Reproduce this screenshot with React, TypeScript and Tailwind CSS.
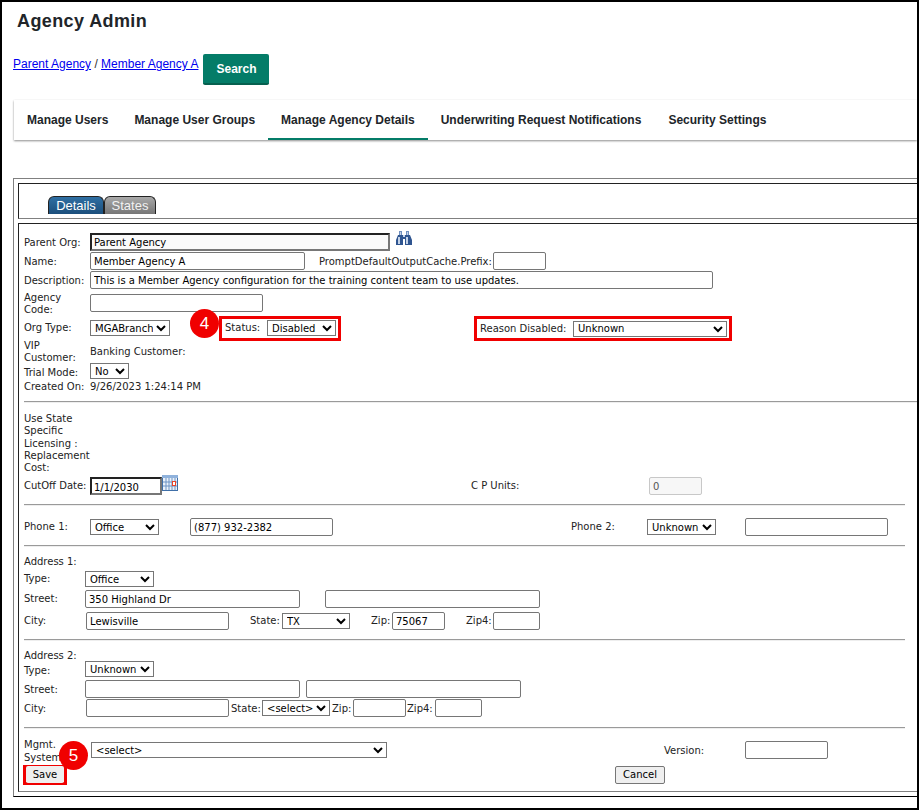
import type { ReactNode } from "react";

const Field = ({ value = "", className = "" }: { value?: string; className?: string }) => (
  <input
    readOnly
    value={value}
    className={`h-[18px] shrink-0 rounded-[2px] border border-[#767676] bg-white px-[3px] text-[10px] text-black outline-none ${className}`}
  />
);

const Drop = ({ value, options, className = "" }: { value: string; options?: string[]; className?: string }) => (
  <select
    defaultValue={value}
    className={`h-4 shrink-0 border border-[#767676] bg-white text-[10px] text-black ${className}`}
  >
    {(options ?? [value]).map((o) => (
      <option key={o}>{o}</option>
    ))}
  </select>
);

const Rule = ({ className = "" }: { className?: string }) => (
  <div className={`h-[2px] border-t border-b border-t-[#9a9a9a] border-b-[#eeeeee] ${className}`} />
);

const Row = ({ className = "", children }: { className?: string; children: ReactNode }) => (
  <div className={`flex items-center whitespace-nowrap ${className}`}>{children}</div>
);

const Badge = ({ n, className = "" }: { n: string; className?: string }) => (
  <div
    className={`absolute z-10 flex h-[29px] w-[29px] items-center justify-center rounded-full bg-[#f00000] font-['Liberation_Sans',sans-serif] text-[17px] text-white ${className}`}
  >
    {n}
  </div>
);

const Binoculars = () => (
  <svg width="16" height="15" viewBox="0 0 16 15" className="mb-[7px] ml-[6px] shrink-0">
    <path d="M3 0h3v4H3zM10 0h3v4h-3z" fill="#6f8fbe" />
    <path d="M2 4h5v2h2V4h5l2 5v5H9V8H7v6H0V9z" fill="#2f5590" />
    <path d="M2 6h2v7H2zM10 6h2v7h-2zM7 4h2v2H7zM4 1h1v3H4zM11 1h1v3h-1z" fill="#c4d3e8" />
  </svg>
);

const CalendarIcon = () => (
  <svg width="16" height="16" viewBox="0 0 16 16" className="mb-[6px] shrink-0">
    <rect width="16" height="16" fill="#3f6fa8" />
    <rect x="0" y="0" width="16" height="3" fill="#8fb2dc" />
    <rect x="1" y="3" width="14" height="12" fill="#eaf1f9" />
    <path d="M4 3v12M7 3v12M10 3v12M13 3v12M1 7h14M1 11h14" stroke="#6d93c4" strokeWidth="1" />
    <rect x="10.5" y="6.5" width="3" height="4" fill="#fff" stroke="#e8442a" strokeWidth="1" />
  </svg>
);

export default function App() {
  return (
    <div className="relative h-[810px] w-[919px] overflow-hidden border-2 border-black bg-white font-['Liberation_Sans',Arial,sans-serif]">
      <h1 className="ml-[15px] mt-[9px] text-[18px] font-bold leading-[21px] tracking-[0.4px] text-[#212529]">
        Agency Admin
      </h1>

      <div className="ml-[11px] mt-[22px] flex items-start">
        <div className="mt-[2px] text-[12px] leading-[16px] text-[#333]">
          <a href="#" className="text-[#0000ee] underline">Parent Agency</a>
          {" / "}
          <a href="#" className="text-[#0000ee] underline">Member Agency A</a>
        </div>
        <button className="ml-[5px] h-[31px] w-[66px] rounded-[2px] border-b-2 border-b-[#06604f] bg-[#047c68] text-[12px] font-bold text-white">
          Search
        </button>
      </div>

      <nav className="ml-[12px] mt-[15px] flex h-10 items-stretch bg-white pl-px text-[12px] font-bold text-[#212529] shadow-[0_1px_2px_rgba(0,0,0,0.45)]">
        <a className="flex items-center border-y-2 border-y-transparent px-3">Manage Users</a>
        <a className="flex items-center border-y-2 border-y-transparent pl-[14px] pr-[13px]">Manage User Groups</a>
        <a className="flex items-center border-y-2 border-b-[#047c68] border-t-transparent px-[13px]">Manage Agency Details</a>
        <a className="flex items-center border-y-2 border-y-transparent px-[13px]">Underwriting Request Notifications</a>
        <a className="flex items-center border-y-2 border-y-transparent px-[14px]">Security Settings</a>
      </nav>

      {/* outset table, runs off the right of the page */}
      <div className="ml-[11px] mt-[38px] h-[619px] w-[1000px] border border-b-black border-l-[#808080] border-r-black border-t-[#808080] p-[4px] font-['DejaVu_Sans',Verdana,sans-serif] text-[10px] leading-[12px] text-[#222]">
        <div className="flex h-[36px] items-end border border-b-[#808080] border-l-[#222] border-r-[#808080] border-t-[#222] pb-[4px] pl-[29px]">
          <div className="flex h-[18px] w-[56px] items-center justify-center rounded-t-[6px] border border-b-0 border-[#222] bg-gradient-to-b from-[#2f6fa3] to-[#1c4f7c] font-['Liberation_Sans',sans-serif] text-[13px] text-white">
            Details
          </div>
          <div className="flex h-[18px] w-[52px] items-center justify-center rounded-t-[6px] border border-b-0 border-[#222] bg-gradient-to-b from-[#a9a9a9] to-[#777] font-['Liberation_Sans',sans-serif] text-[13px] text-[#f2f2f2]">
            States
          </div>
        </div>

        <div className="relative mt-[4px] h-[569px] border border-b-[#808080] border-l-[#222] border-r-[#808080] border-t-[#222] pl-[5px] pt-[8px]">
          <Row className="h-[19px]">
            <span className="w-[66px] translate-y-px">Parent Org:</span>
            <input
              readOnly
              value="Parent Agency"
              className="h-[18px] w-[300px] border-2 border-b-[#777] border-l-[#222] border-r-[#777] border-t-[#222] bg-[#fafafa] px-[2px] pt-[2px] text-[10px] text-black outline-none"
            />
            <Binoculars />
          </Row>
          <Row className="h-[19px]">
            <span className="w-[66px] translate-y-px">Name:</span>
            <Field value="Member Agency A" className="w-[215px] pt-[2px]" />
            <span className="ml-[14px] w-[174px] translate-y-px">PromptDefaultOutputCache.Prefix:</span>
            <Field className="w-[53px]" />
          </Row>
          <Row className="h-[19px]">
            <span className="w-[66px] translate-y-px">Description:</span>
            <Field
              value="This is a Member Agency configuration for the training content team to use updates."
              className="w-[623px] pt-[2px]"
            />
          </Row>
          <Row className="mt-px h-[25px]">
            <span className="w-[66px] translate-y-px">Agency<br />Code:</span>
            <Field className="w-[173px]" />
          </Row>
          <Row className="relative h-[26px]">
            <span className="w-[66px]">Org Type:</span>
            <Drop value="MGABranch" className="w-[80px]" />
            <Badge n="4" className="left-[166px] top-[-6px]" />
            <div className="ml-[49px] flex h-[25px] w-[122px] items-center border-[3px] border-[#f00000] pl-[3px]">
              <span className="w-[42px]">Status:</span>
              <Drop value="Disabled" className="w-[69px]" />
            </div>
            <div className="ml-[133px] mt-px flex h-[25px] w-[258px] items-center border-[3px] border-[#f00000] pl-[3px]">
              <span className="w-[93px]">Reason Disabled:</span>
              <Drop value="Unknown" className="w-[154px]" />
            </div>
          </Row>
          <Row className="h-[21px]">
            <span className="w-[66px]">VIP<br />Customer:</span>
            <span>Banking Customer:</span>
          </Row>
          <Row className="h-[18px]">
            <span className="w-[66px] translate-y-[2px]">Trial Mode:</span>
            <Drop value="No" className="w-[39px]" />
          </Row>
          <Row className="h-[14px]">
            <span className="w-[66px]">Created On:</span>
            <span>9/26/2023 1:24:14 PM</span>
          </Row>

          <Rule className="mt-[7px]" />

          <div className="mt-[10px] w-[66px] leading-[12.25px]">
            Use State Specific Licensing : Replacement Cost:
          </div>
          <Row className="h-[24px]">
            <span className="w-[66px]">CutOff Date:</span>
            <input
              readOnly
              value="1/1/2030"
              className="h-[18px] w-[72px] border-2 border-b-[#777] border-l-[#222] border-r-[#777] border-t-[#222] px-[2px] pt-[2px] text-[10px] text-black outline-none"
            />
            <CalendarIcon />
            <span className="ml-[293px] w-[178px]">C P Units:</span>
            <input
              readOnly
              value="0"
              className="h-[18px] w-[53px] rounded-[2px] border border-[#c8c8c8] bg-[#f7f7f7] px-[3px] text-[10px] text-[#555] outline-none"
            />
          </Row>

          <Rule className="mt-[6px] w-[881px]" />

          <Row className="mt-[12px] h-[18px]">
            <span className="w-[66px]">Phone 1:</span>
            <Drop value="Office" className="w-[69px]" />
            <Field value="(877) 932-2382" className="ml-[31px] w-[143px]" />
            <span className="ml-[238px] w-[76px]">Phone 2:</span>
            <Drop value="Unknown" className="w-[69px]" />
            <Field className="ml-[29px] w-[143px]" />
          </Row>

          <Rule className="mt-[9px] w-[881px]" />

          <div className="mt-[9px]">Address 1:</div>
          <Row className="mt-[2px] h-[18px]">
            <span className="w-[61px]">Type:</span>
            <Drop value="Office" className="w-[69px]" />
          </Row>
          <Row className="mt-[2px] h-[18px]">
            <span className="w-[61px]">Street:</span>
            <Field value="350 Highland Dr" className="w-[215px]" />
            <Field className="ml-[25px] w-[215px]" />
          </Row>
          <Row className="mt-[4px] h-[18px]">
            <span className="w-[62px]">City:</span>
            <Field value="Lewisville" className="w-[143px]" />
            <span className="ml-[21px] w-[32px]">State:</span>
            <Drop value="TX" className="w-[68px]" />
            <span className="ml-[21px] w-[21px]">Zip:</span>
            <Field value="75067" className="w-[53px]" />
            <span className="ml-[21px] w-[27px]">Zip4:</span>
            <Field className="w-[47px]" />
          </Row>

          <Rule className="mt-[9px] w-[881px]" />

          <div className="mt-[9px]">Address 2:</div>
          <Row className="mt-[-2px] h-[18px]">
            <span className="w-[61px] translate-y-[2px]">Type:</span>
            <Drop value="Unknown" className="w-[69px]" />
          </Row>
          <Row className="mt-[2px] h-[18px]">
            <span className="w-[61px] translate-y-px">Street:</span>
            <Field className="w-[215px]" />
            <Field className="ml-[6px] w-[215px]" />
          </Row>
          <Row className="mt-px h-[18px]">
            <span className="w-[62px] translate-y-px">City:</span>
            <Field className="w-[143px]" />
            <span className="ml-[2px] w-[31px] translate-y-px">State:</span>
            <Drop value="<select>" className="w-[68px]" />
            <span className="ml-[2px] w-[21px] translate-y-px">Zip:</span>
            <Field className="w-[53px]" />
            <span className="ml-px w-[28px] translate-y-px">Zip4:</span>
            <Field className="w-[47px]" />
          </Row>

          <Rule className="mt-[10px] w-[881px]" />

          <Row className="relative mt-[8px] h-[27px]">
            <span className="w-[67px] leading-[13px]">Mgmt.<br />System:</span>
            <Drop value="<select>" className="mb-px w-[296px]" />
            <span className="ml-[277px] w-[81px]">Version:</span>
            <Field className="mb-px w-[83px]" />
            <Badge n="5" className="left-[35px] top-[4px]" />
          </Row>
          <Row className="h-[21px]">
            <div className="flex h-5 w-11 -translate-x-px items-center justify-center border-[3px] border-[#f00000]">
              <button className="h-[17px] w-[38px] rounded-[2px] bg-[#efefef] text-[10px] text-black">Save</button>
            </div>
            <button className="ml-[547px] h-[18px] w-[50px] rounded-[2px] border border-[#767676] bg-[#efefef] text-[10px] text-black">
              Cancel
            </button>
          </Row>
        </div>
      </div>
    </div>
  );
}
